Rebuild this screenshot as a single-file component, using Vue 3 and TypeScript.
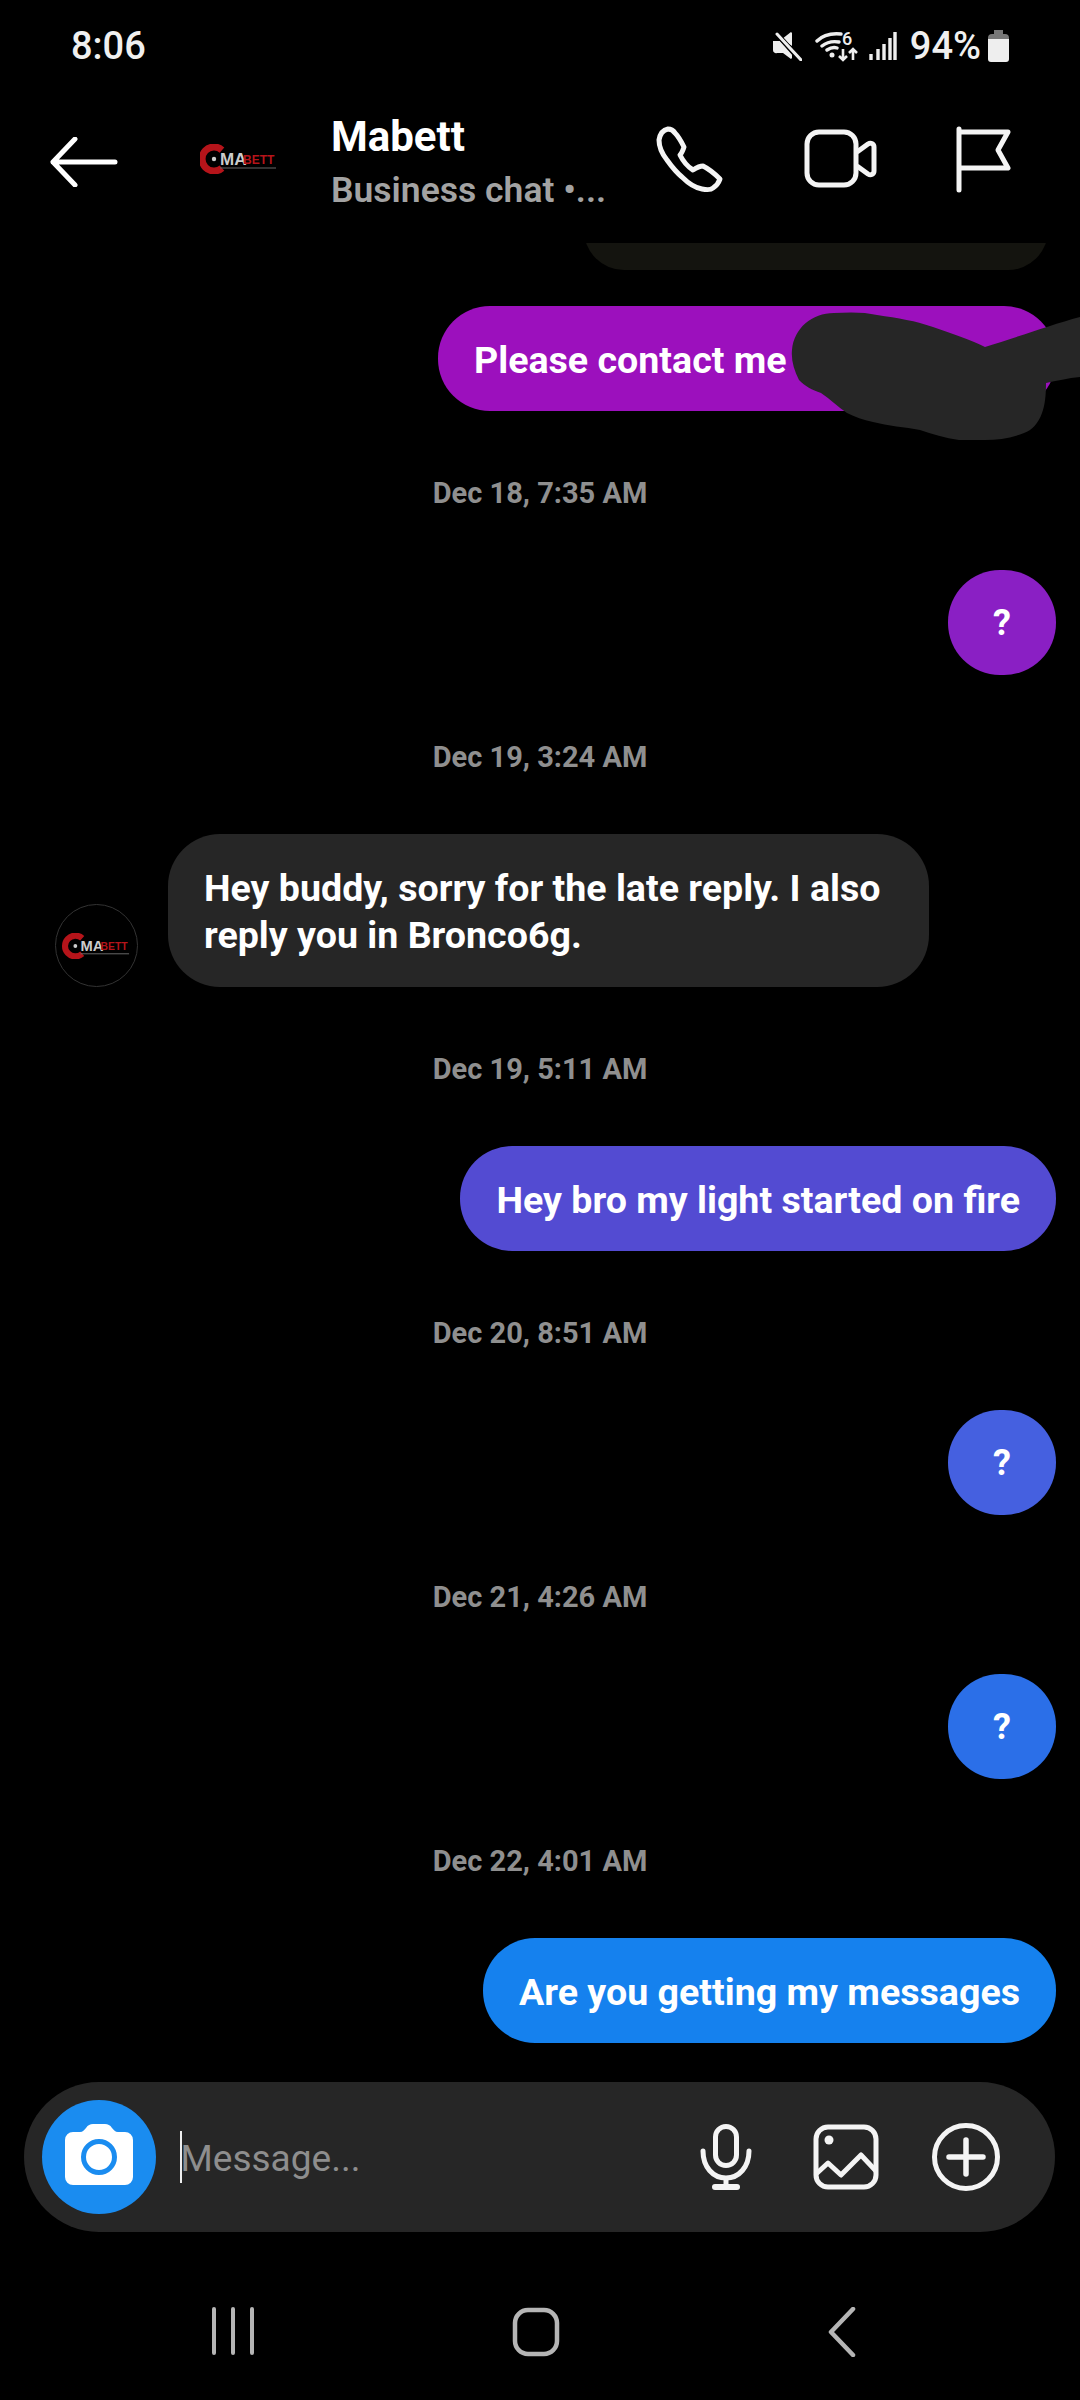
<script setup lang="ts">
interface Item {
  date?: string
  text?: string
  color?: string
  incoming?: boolean
  round?: boolean
}
const items: Item[] = [
  { date: 'Dec 18, 7:35 AM' },
  { text: '?', color: '#8a1fc4', round: true },
  { date: 'Dec 19, 3:24 AM' },
  { text: 'Hey buddy, sorry for the late reply. I also reply you in Bronco6g.', incoming: true },
  { date: 'Dec 19, 5:11 AM' },
  { text: 'Hey bro my light started on fire', color: '#534bd2' },
  { date: 'Dec 20, 8:51 AM' },
  { text: '?', color: '#4560e0', round: true },
  { date: 'Dec 21, 4:26 AM' },
  { text: '?', color: '#2b6fe8', round: true },
  { date: 'Dec 22, 4:01 AM' },
  { text: 'Are you getting my messages', color: '#1581ee' }
]
</script>

<template>
  <div class="phone">
    <div class="status">
      <span class="clock">8:06</span>
      <div class="status-right">
        <svg class="s-mute" width="30" height="30" viewBox="0 0 30 30">
          <path d="M1 10h7l3 3 9 10v4l-1 1-8-6H5a3 3 0 0 1-4-3z" fill="#eee" />
          <path d="M10 8l9-7 1 1v13z" fill="#eee" />
          <path d="M5 3l23 26" stroke="#000" stroke-width="5" />
          <path d="M5 3l24 26" stroke="#eee" stroke-width="3" stroke-linecap="round" />
        </svg>
        <svg class="s-wifi" width="44" height="32" viewBox="0 0 44 32">
          <path d="M2 11C8 5 16 3 26 4M7 16c5-4 11-5 17-4M12 20c3-2 7-3 10-2" fill="none" stroke="#eee" stroke-width="3.4" stroke-linecap="round" />
          <circle cx="17" cy="25" r="2.5" fill="#eee" />
          <text x="27" y="15" class="six">6</text>
          <path d="M28 19v11M24 26l4 4 4-4M38 30V19M34 23l4-4 4 4" fill="none" stroke="#eee" stroke-width="2.6" />
        </svg>
        <svg class="s-sig" width="28" height="30" viewBox="0 0 28 30">
          <path d="M2 23v6M9 18v11M15 13v16M21 7v22M26 1v28" stroke="#eee" stroke-width="3.4" fill="none" />
        </svg>
        <span class="batt-text">94%</span>
        <svg width="21" height="32" viewBox="0 0 21 32">
          <path d="M6 0h9v4H6z" fill="#777" />
          <path d="M4 4h13a4 4 0 0 1 4 4v3H0V8a4 4 0 0 1 4-4z" fill="#777" />
          <path d="M0 9h21v20a3 3 0 0 1-3 3H3a3 3 0 0 1-3-3z" fill="#eee" />
        </svg>
      </div>
    </div>

    <div class="header">
      <svg class="back" width="68" height="50" viewBox="0 0 68 50">
        <path d="M25 2L3 25l22 23M3 25h62" fill="none" stroke="#fff" stroke-width="5" stroke-linecap="round" stroke-linejoin="round" />
      </svg>
      <svg class="logo-top" width="78" height="30" viewBox="0 0 78 30">
        <path d="M22 6A12 12 0 1 0 22 24" fill="none" stroke="#b5141a" stroke-width="7" />
        <circle cx="14" cy="15" r="2.2" fill="#ccc" />
        <text x="20" y="21" class="lg-a">MA</text>
        <text x="43" y="20" class="lg-b">BETT</text>
        <path d="M20 24h56" stroke="#666" stroke-width="1" />
      </svg>
      <div class="who">
        <div class="name">Mabett</div>
        <div class="sub">Business chat •...</div>
      </div>
      <svg class="phone-ic" width="68" height="70" viewBox="0 0 68 70">
        <path d="M12 4C7 5 4 9 3 15C3 22 7 30 11 35C16 42 20 47 26 52C32 58 40 63 46 64C51 65 55 65 57 63C60 61 63 57 64 54C59 49 53 44 47 41C43 41 40 43 37 45C32 42 27 36 24 30C26 28 27 25 28 22C25 16 22 11 19 8C17 5 15 4 12 4Z" fill="none" stroke="#f4f4f4" stroke-width="5" stroke-linejoin="round" />
      </svg>
      <svg class="video-ic" width="74" height="62" viewBox="0 0 74 62">
        <rect x="3" y="3" width="49" height="53" rx="12" fill="none" stroke="#f4f4f4" stroke-width="5" />
        <path d="M53 23L64 15C67 13 70 15 70 18V42C70 45 67 47 64 45L53 37" fill="none" stroke="#f4f4f4" stroke-width="5" stroke-linejoin="round" />
      </svg>
      <svg class="flag-ic" width="56" height="68" viewBox="0 0 56 68">
        <path d="M3 3V64M3 6H52L42 24L52 42H3" fill="none" stroke="#f4f4f4" stroke-width="5" stroke-linecap="round" stroke-linejoin="round" />
      </svg>
    </div>

    <div class="messages">
      <div class="row out">
        <div class="bubble cut"></div>
      </div>
      <div class="row out first">
        <div class="bubble purple">Please contact me</div>
      </div>
      <template v-for="(m, i) in items" :key="i">
        <div v-if="m.date" class="date">{{ m.date }}</div>
        <div v-else-if="m.incoming" class="row in">
          <div class="avatar">
            <svg width="78" height="26" viewBox="0 0 78 30">
              <path d="M22 6A12 12 0 1 0 22 24" fill="none" stroke="#b5141a" stroke-width="7" />
              <circle cx="14" cy="15" r="2.2" fill="#ccc" />
              <text x="20" y="21" class="lg-a">MA</text>
              <text x="43" y="20" class="lg-b">BETT</text>
              <path d="M20 24h56" stroke="#777" stroke-width="1" />
            </svg>
          </div>
          <div class="bubble gray">{{ m.text }}</div>
        </div>
        <div v-else class="row out">
          <div class="bubble" :class="{ round: m.round }" :style="{ background: m.color }">{{ m.text }}</div>
        </div>
      </template>
    </div>

    <svg class="blot" width="300" height="145" viewBox="0 0 300 145">
      <path d="M12 50C14 28 32 13 54 13C70 12 85 12 97 15C118 18 136 21 153 27C172 34 192 40 205 47C235 38 270 25 300 17L300 77C288 78 276 81 266 83C266 95 265 105 262 113C258 124 252 130 244 133C232 138 218 140 205 140L179 140C165 138 152 134 140 130C125 127 108 126 93 122C83 120 75 117 67 113C58 107 50 99 41 93C32 90 25 86 19 80C14 70 11 60 12 50Z" fill="#262626" />
    </svg>

    <div class="composer">
      <div class="cam">
        <svg class="cam-ic" width="68" height="61" viewBox="0 0 68 61">
          <path d="M8 8H15C18 8 19 6 21 4C23 1 25 0 28 0H40C43 0 45 1 47 4C49 6 50 8 53 8H60a8 8 0 0 1 8 8V53a8 8 0 0 1-8 8H8a8 8 0 0 1-8-8V16a8 8 0 0 1 8-8Z" fill="#fff" />
          <circle cx="34" cy="33" r="15.5" fill="#fff" stroke="#1a8cf0" stroke-width="5" />
        </svg>
      </div>
      <div class="caret"></div>
      <div class="placeholder">Message...</div>
      <svg class="mic" width="52" height="68" viewBox="0 0 52 68">
        <rect x="15.5" y="3.5" width="21" height="39" rx="10.5" fill="none" stroke="#f4f4f4" stroke-width="5" />
        <path d="M3 28C3 44 13 55 26 55S49 44 49 28" fill="none" stroke="#f4f4f4" stroke-width="5" stroke-linecap="round" />
        <path d="M26 55v8" stroke="#f4f4f4" stroke-width="5" />
        <path d="M15 64h22" stroke="#f4f4f4" stroke-width="6" stroke-linecap="round" />
      </svg>
      <svg class="pic" width="66" height="66" viewBox="0 0 66 66">
        <rect x="3" y="3" width="60" height="60" rx="12" fill="none" stroke="#f4f4f4" stroke-width="5" />
        <circle cx="16" cy="16" r="4.5" fill="#f4f4f4" />
        <path d="M3 50L15 39L28 51L48 31L63 47" fill="none" stroke="#f4f4f4" stroke-width="5" stroke-linejoin="round" />
      </svg>
      <svg class="plus" width="68" height="68" viewBox="0 0 68 68">
        <circle cx="34" cy="34" r="31.5" fill="none" stroke="#f4f4f4" stroke-width="5" />
        <path d="M34 17v34M17 34h34" stroke="#f4f4f4" stroke-width="5.5" stroke-linecap="round" />
      </svg>
    </div>

    <div class="nav">
      <svg class="n-recent" width="44" height="48" viewBox="0 0 44 48">
        <path d="M3 2v44M22 2v44M41 2v44" stroke="#b5b5b5" stroke-width="4" stroke-linecap="round" />
      </svg>
      <svg class="n-home" width="48" height="50" viewBox="0 0 48 50">
        <rect x="3" y="3" width="42" height="44" rx="13" fill="none" stroke="#b5b5b5" stroke-width="4.5" />
      </svg>
      <svg class="n-back" width="28" height="50" viewBox="0 0 28 50">
        <path d="M25 2L3 25l22 23" fill="none" stroke="#b5b5b5" stroke-width="4.5" stroke-linecap="round" stroke-linejoin="round" />
      </svg>
    </div>
  </div>
</template>

<style scoped>
.phone {
  width: 1080px;
  height: 2400px;
  background: #000;
  display: flex;
  flex-direction: column;
  position: relative;
  overflow: hidden;
  font-family: Roboto, "Liberation Sans", sans-serif;
  color: #fff;
}
.status {
  height: 90px;
  padding: 28px 71px 0;
  box-sizing: border-box;
  display: flex;
  justify-content: space-between;
  align-items: flex-start;
}
.clock {
  font-size: 38px;
  line-height: 36px;
  font-weight: 500;
  color: #f0f0f0;
}
.status-right {
  display: flex;
  align-items: center;
  height: 36px;
}
.s-mute { margin-right: 13px; }
.s-wifi { margin-right: 10px; }
.s-sig { margin-right: 13px; }
.batt-text {
  font-size: 38px;
  line-height: 36px;
  font-weight: 500;
  color: #f0f0f0;
  margin-right: 7px;
}
.six { font: 500 18px Roboto, sans-serif; fill: #eee; }
.header {
  height: 153px;
  display: flex;
  align-items: flex-start;
  padding-left: 50px;
  box-sizing: border-box;
}
.back { margin: 47px 0 0; }
.logo-top { margin: 54px 0 0 82px; }
.lg-a { font: 700 17px "Liberation Sans", sans-serif; fill: #ccc; }
.lg-b { font: 700 12px "Liberation Sans", sans-serif; fill: #b5141a; }
.who { margin: 22px 0 0 53px; width: 325px; }
.name {
  font-size: 42px;
  line-height: 50px;
  font-weight: 700;
}
.sub {
  font-size: 35.5px;
  line-height: 50px;
  font-weight: 600;
  color: #a3a3a3;
  margin-top: 3px;
}
.phone-ic { margin-top: 35px; }
.video-ic { margin: 39px 0 0 80px; }
.flag-ic { margin: 36px 0 0 78px; }
.messages {
  flex: 1;
  min-height: 0;
  overflow: hidden;
  display: flex;
  flex-direction: column;
  padding: 0 24px 0 55px;
}
.row { display: flex; flex-shrink: 0; }
.row.out { justify-content: flex-end; }
.row.in { align-items: flex-end; gap: 30px; }
.row.first { margin-top: 36px; }
.bubble {
  font-size: 37.6px;
  line-height: 47px;
  font-weight: 700;
  padding: 31px 36px 27px;
  border-radius: 52px;
  color: #fff;
  white-space: nowrap;
}
.cut {
  width: 464px;
  height: 80px;
  box-sizing: border-box;
  margin: -53px 8px 0 0;
  padding: 0;
  background: #14140f;
  border-radius: 50px;
}
.purple {
  background: #9c10bd;
  width: 618px;
  box-sizing: border-box;
}
.round {
  width: 108px;
  height: 105px;
  box-sizing: border-box;
  padding: 2px 0 0;
  display: flex;
  align-items: center;
  justify-content: center;
  font-size: 36px;
}
.gray {
  background: #262626;
  width: 761px;
  height: 153px;
  box-sizing: border-box;
  white-space: normal;
  border-radius: 52px;
}
.avatar {
  width: 83px;
  height: 83px;
  box-sizing: border-box;
  border: 1.5px solid #333;
  border-radius: 50%;
  display: flex;
  align-items: center;
  justify-content: center;
  flex-shrink: 0;
}
.date {
  flex-shrink: 0;
  text-align: center;
  margin: 65px 0 60px -31px;
  font-size: 29px;
  line-height: 34px;
  font-weight: 700;
  color: #8f8f8f;
}
.blot {
  position: absolute;
  left: 780px;
  top: 300px;
}
.composer {
  margin: 0 25px 0 24px;
  height: 150px;
  background: #262626;
  border-radius: 75px;
  display: flex;
  align-items: center;
  flex-shrink: 0;
}
.cam {
  width: 114px;
  height: 114px;
  border-radius: 50%;
  background: #1a8cf0;
  margin-left: 18px;
  display: flex;
  align-items: center;
  justify-content: center;
  flex-shrink: 0;
}
.cam-ic { margin-bottom: 6px; }
.caret {
  width: 1.5px;
  height: 52px;
  background: #eee;
  margin-left: 24px;
}
.placeholder {
  flex: 1;
  font-size: 37px;
  font-weight: 400;
  color: #8e8e8e;
  margin-left: -1px;
  padding-top: 3px;
}
.mic { margin-right: 61px; }
.pic { margin-right: 53px; }
.plus { margin-right: 55px; }
.nav {
  height: 168px;
  display: flex;
  align-items: flex-start;
  box-sizing: border-box;
  padding-top: 75px;
}
.n-recent { margin-left: 211px; }
.n-home { margin-left: 257px; }
.n-back { margin-left: 268px; }
</style>

<style>
html, body { margin: 0; background: #000; }
</style>
